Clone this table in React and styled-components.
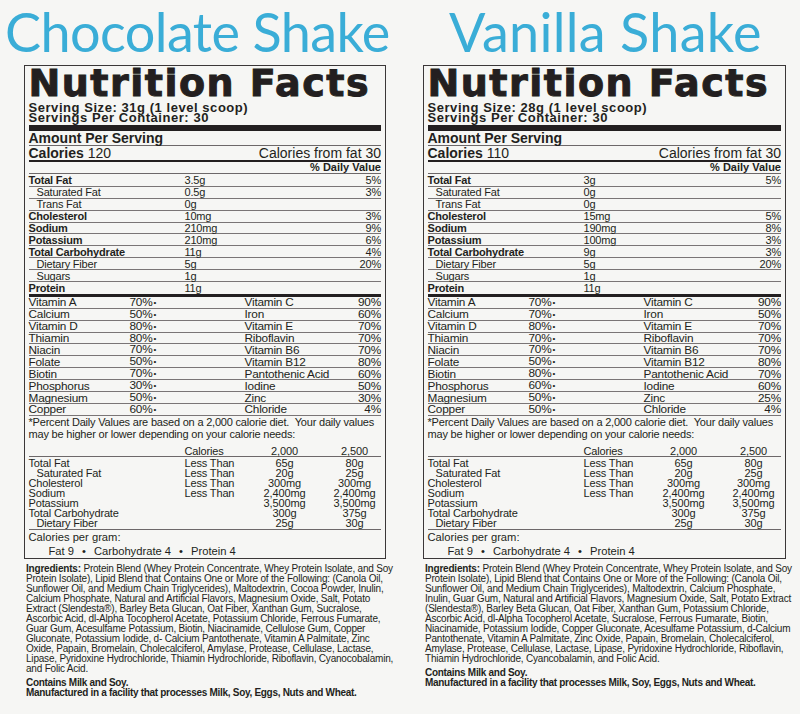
import React from "react";
import styled, { createGlobalStyle } from "styled-components";

const GlobalStyle = createGlobalStyle`
  html, body {
    margin: 0;
    background: #f6f6f4;
  }
  body {
    font-family: "Liberation Sans", Arial, sans-serif;
    color: #231f20;
  }
`;

const Page = styled.div`
  display: flex;
  gap: 37px;
  padding: 6px 0 0 24px;
  height: 708px;
  overflow: hidden;
`;

const Column = styled.section`
  width: ${(p) => p.$w}px;
  display: flex;
  flex-direction: column;
  flex-shrink: 0;
`;

const Title = styled.h1`
  margin: 0 0 7px ${(p) => p.$shift}px;
  font-family: Lato, "Open Sans", sans-serif;
  font-weight: 400;
  font-size: 54px;
  line-height: 52px;
  letter-spacing: ${(p) => p.$track}px;
  color: #3aadd7;
  white-space: nowrap;
`;

const Label = styled.div`
  border: 1.5px solid #3b3738;
  padding: 0 4px 0 3.5px;
`;

const Heading = styled.div`
  font-family: "DejaVu Sans", "Liberation Sans", sans-serif;
  font-weight: 700;
  font-size: 38px;
  line-height: 34px;
  letter-spacing: 1.5px;
  -webkit-text-stroke: 1px #231f20;
  white-space: nowrap;
`;

const Serving = styled.div`
  margin-top: ${(p) => (p.$first ? 2.5 : 0)}px;
  font-weight: 700;
  font-size: 13px;
  line-height: 10px;
  letter-spacing: 0.55px;
  white-space: nowrap;
`;

const ThickBar = styled.div`
  height: ${(p) => p.$h}px;
  background: #231f20;
  margin-top: ${(p) => p.$mt || 0}px;
`;

const Bar = styled.div`
  display: flex;
  justify-content: ${(p) => (p.$right ? "flex-end" : "space-between")};
  align-items: center;
  height: ${(p) => p.$h}px;
  border-bottom: ${(p) => p.$line}px solid ${(p) => (p.$line > 1 ? "#231f20" : "#6d6869")};
  font-size: 14px;
  white-space: nowrap;
  b {
    font-weight: 700;
  }
`;

const DvHead = styled.b`
  font-size: 11px;
  font-weight: 700;
`;

const List = styled.div`
  padding-top: ${(p) => p.$pt || 0}px;
`;

const NutrientRow = styled.div`
  display: grid;
  grid-template-columns: 156px 1fr auto;
  align-items: center;
  height: 11.9px;
  box-sizing: border-box;
  border-bottom: ${(p) => (p.$last ? "none" : "1px solid #7a7576")};
  font-size: 11px;
  letter-spacing: -0.2px;
  line-height: 10px;
  white-space: nowrap;
`;

const Name = styled.span`
  font-weight: ${(p) => (p.$bold ? 700 : 400)};
  padding-left: ${(p) => (p.$indent ? 8 : 0)}px;
`;

const Pct = styled.span`
  text-align: right;
`;

const VitaminRow = styled.div`
  display: grid;
  grid-template-columns: 101px 115px 1fr auto;
  align-items: center;
  height: 11.9px;
  box-sizing: border-box;
  border-bottom: 1px solid #7a7576;
  font-size: 11.8px;
  letter-spacing: -0.2px;
  line-height: 10px;
  white-space: nowrap;
`;

const Dot = styled.span`
  font-size: 8px;
  margin-left: 1px;
  vertical-align: 1px;
`;

const Footnote = styled.div`
  font-size: 11px;
  line-height: 12.3px;
  white-space: pre;
  letter-spacing: -0.2px;
`;

const DvTable = styled.div`
  margin-top: 6px;
  border-bottom: 1px solid #6d6869;
  padding-bottom: 1px;
`;

const DvRow = styled.div`
  display: grid;
  grid-template-columns: 156px 74px 52px 18px 52px;
  height: 10px;
  line-height: 10px;
  font-size: 11px;
  letter-spacing: -0.15px;
  white-space: nowrap;
  border-bottom: ${(p) => (p.$head ? "1px solid #6d6869" : "none")};
  margin-bottom: ${(p) => (p.$head ? 1 : 0)}px;
`;

const Cell = styled.span`
  text-align: ${(p) => (p.$center ? "center" : "left")};
  padding-left: ${(p) => (p.$indent ? 8 : 0)}px;
  grid-column: ${(p) => p.$col || "auto"};
`;

const PerGram = styled.div`
  display: flex;
  align-items: center;
  height: 14px;
  font-size: 11.2px;
  white-space: nowrap;
  padding-left: ${(p) => p.$pad || 0}px;
`;

const Sep = styled.span`
  margin: 0 8px;
`;

const Ingredients = styled.div`
  margin-top: 5px;
  padding-left: 2px;
  font-size: 10px;
  line-height: 10px;
  letter-spacing: -0.2px;
  white-space: nowrap;
`;

const Allergy = styled.div`
  margin-top: 3.5px;
  padding-left: 2px;
  font-size: 10px;
  line-height: 10px;
  font-weight: 700;
  letter-spacing: -0.3px;
  white-space: nowrap;
`;

const dailyRows = [
  ["Total Fat", "Less Than", "65g", "80g"],
  ["Saturated Fat", "Less Than", "20g", "25g", true],
  ["Cholesterol", "Less Than", "300mg", "300mg"],
  ["Sodium", "Less Than", "2,400mg", "2,400mg"],
  ["Potassium", "", "3,500mg", "3,500mg"],
  ["Total Carbohydrate", "", "300g", "375g"],
  ["Dietary Fiber", "", "25g", "30g", true],
];

const shakes = [
  {
    title: "Chocolate Shake",
    shift: -19,
    track: -0.6,
    width: 362,
    serving: "31g",
    calories: "120",
    nutrients: [
      ["Total Fat", "3.5g", "5%", "b"],
      ["Saturated Fat", "0.5g", "3%", "i"],
      ["Trans Fat", "0g", "", "i"],
      ["Cholesterol", "10mg", "3%", "b"],
      ["Sodium", "210mg", "9%", "b"],
      ["Potassium", "210mg", "6%", "b"],
      ["Total Carbohydrate", "11g", "4%", "b"],
      ["Dietary Fiber", "5g", "20%", "i"],
      ["Sugars", "1g", "", "i"],
      ["Protein", "11g", "", "b"],
    ],
    vitamins: [
      ["Vitamin A", "70%", "Vitamin C", "90%"],
      ["Calcium", "50%", "Iron", "60%"],
      ["Vitamin D", "80%", "Vitamin E", "70%"],
      ["Thiamin", "80%", "Riboflavin", "70%"],
      ["Niacin", "70%", "Vitamin B6", "70%"],
      ["Folate", "50%", "Vitamin B12", "80%"],
      ["Biotin", "70%", "Pantothenic Acid", "60%"],
      ["Phosphorus", "30%", "Iodine", "50%"],
      ["Magnesium", "50%", "Zinc", "30%"],
      ["Copper", "60%", "Chloride", "4%"],
    ],
    ingredients: [
      " Protein Blend (Whey Protein Concentrate, Whey Protein Isolate, and Soy",
      "Protein Isolate), Lipid Blend that Contains One or More of the Following: (Canola Oil,",
      "Sunflower Oil, and Medium Chain Triglycerides), Maltodextrin, Cocoa Powder, Inulin,",
      "Calcium Phosphate, Natural and Artificial Flavors, Magnesium Oxide, Salt, Potato",
      "Extract (Slendesta®), Barley Beta Glucan, Oat Fiber, Xanthan Gum, Sucralose,",
      "Ascorbic Acid, dl-Alpha Tocopherol Acetate, Potassium Chloride, Ferrous Fumarate,",
      "Guar Gum, Acesulfame Potassium, Biotin, Niacinamide, Cellulose Gum, Copper",
      "Gluconate, Potassium Iodide, d- Calcium Pantothenate, Vitamin A Palmitate, Zinc",
      "Oxide, Papain, Bromelain, Cholecalciferol, Amylase, Protease, Cellulase, Lactase,",
      "Lipase, Pyridoxine Hydrochloride, Thiamin Hydrochloride, Riboflavin, Cyanocobalamin,",
      "and Folic Acid.",
    ],
  },
  {
    title: "Vanilla Shake",
    shift: 26,
    track: 0.3,
    width: 363,
    serving: "28g",
    calories: "110",
    nutrients: [
      ["Total Fat", "3g", "5%", "b"],
      ["Saturated Fat", "0g", "", "i"],
      ["Trans Fat", "0g", "", "i"],
      ["Cholesterol", "15mg", "5%", "b"],
      ["Sodium", "190mg", "8%", "b"],
      ["Potassium", "100mg", "3%", "b"],
      ["Total Carbohydrate", "9g", "3%", "b"],
      ["Dietary Fiber", "5g", "20%", "i"],
      ["Sugars", "1g", "", "i"],
      ["Protein", "11g", "", "b"],
    ],
    vitamins: [
      ["Vitamin A", "70%", "Vitamin C", "90%"],
      ["Calcium", "70%", "Iron", "50%"],
      ["Vitamin D", "80%", "Vitamin E", "70%"],
      ["Thiamin", "70%", "Riboflavin", "70%"],
      ["Niacin", "70%", "Vitamin B6", "70%"],
      ["Folate", "50%", "Vitamin B12", "80%"],
      ["Biotin", "80%", "Pantothenic Acid", "70%"],
      ["Phosphorus", "60%", "Iodine", "60%"],
      ["Magnesium", "50%", "Zinc", "25%"],
      ["Copper", "50%", "Chloride", "4%"],
    ],
    ingredients: [
      " Protein Blend (Whey Protein Concentrate, Whey Protein Isolate, and Soy",
      "Protein Isolate), Lipid Blend that Contains One or More of the Following: (Canola Oil,",
      "Sunflower Oil, and Medium Chain Triglycerides), Maltodextrin, Calcium Phosphate,",
      "Inulin, Guar Gum, Natural and Artificial Flavors, Magnesium Oxide, Salt, Potato Extract",
      "(Slendesta®), Barley Beta Glucan, Oat Fiber, Xanthan Gum, Potassium Chloride,",
      "Ascorbic Acid, dl-Alpha Tocopherol Acetate, Sucralose, Ferrous Fumarate, Biotin,",
      "Niacinamide, Potassium Iodide, Copper Gluconate, Acesulfame Potassium, d-Calcium",
      "Pantothenate, Vitamin A Palmitate, Zinc Oxide, Papain, Bromelain, Cholecalciferol,",
      "Amylase, Protease, Cellulase, Lactase, Lipase, Pyridoxine Hydrochloride, Riboflavin,",
      "Thiamin Hydrochloride, Cyancobalamin, and Folic Acid.",
    ],
  },
];

function NutritionLabel({ shake }) {
  return (
    <Label>
      <Heading>Nutrition Facts</Heading>
      <Serving $first>Serving Size: {shake.serving} (1 level scoop)</Serving>
      <Serving>Servings Per Container: 30</Serving>
      <ThickBar $h={5.5} $mt={2.5} />
      <Bar $h={14} $line={1}>
        <b>Amount Per Serving</b>
      </Bar>
      <Bar $h={14} $line={2}>
        <span>
          <b>Calories</b> {shake.calories}
        </span>
        <span>Calories from fat 30</span>
      </Bar>
      <Bar $h={11} $line={1} $right>
        <DvHead>% Daily Value</DvHead>
      </Bar>
      <List $pt={1.5}>
        {shake.nutrients.map(([name, amount, pct, kind], i) => (
          <NutrientRow key={name} $last={i === shake.nutrients.length - 1}>
            <Name $bold={kind === "b"} $indent={kind === "i"}>
              {name}
            </Name>
            <span>{amount}</span>
            <Pct>{pct}</Pct>
          </NutrientRow>
        ))}
      </List>
      <ThickBar $h={3} />
      <List>
        {shake.vitamins.map(([a, ap, b, bp]) => (
          <VitaminRow key={a}>
            <span>{a}</span>
            <span>
              {ap}
              <Dot>•</Dot>
            </span>
            <span>{b}</span>
            <Pct>{bp}</Pct>
          </VitaminRow>
        ))}
      </List>
      <Footnote>
        {"*Percent Daily Values are based on a 2,000 calorie diet.  Your daily values\nmay be higher or lower depending on your calorie needs:"}
      </Footnote>
      <DvTable>
        <DvRow $head>
          <Cell $col="2">Calories</Cell>
          <Cell $center>2,000</Cell>
          <Cell $col="5" $center>
            2,500
          </Cell>
        </DvRow>
        {dailyRows.map(([name, limit, a, b, indent]) => (
          <DvRow key={name}>
            <Cell $indent={indent}>{name}</Cell>
            <Cell>{limit}</Cell>
            <Cell $center>{a}</Cell>
            <Cell $col="5" $center>
              {b}
            </Cell>
          </DvRow>
        ))}
      </DvTable>
      <PerGram>Calories per gram:</PerGram>
      <PerGram $pad={20}>
        <span>Fat 9</span>
        <Sep>•</Sep>
        <span>Carbohydrate 4</span>
        <Sep>•</Sep>
        <span>Protein 4</span>
      </PerGram>
    </Label>
  );
}

export default function App() {
  return (
    <>
      <GlobalStyle />
      <Page>
        {shakes.map((shake) => (
          <Column key={shake.title} $w={shake.width}>
            <Title $shift={shake.shift} $track={shake.track}>
              {shake.title}
            </Title>
            <NutritionLabel shake={shake} />
            <Ingredients>
              {shake.ingredients.map((line, i) => (
                <div key={i}>
                  {i === 0 && <b>Ingredients:</b>}
                  {line}
                </div>
              ))}
            </Ingredients>
            <Allergy>
              <div>Contains Milk and Soy.</div>
              <div>Manufactured in a facility that processes Milk, Soy, Eggs, Nuts and Wheat.</div>
            </Allergy>
          </Column>
        ))}
      </Page>
    </>
  );
}
